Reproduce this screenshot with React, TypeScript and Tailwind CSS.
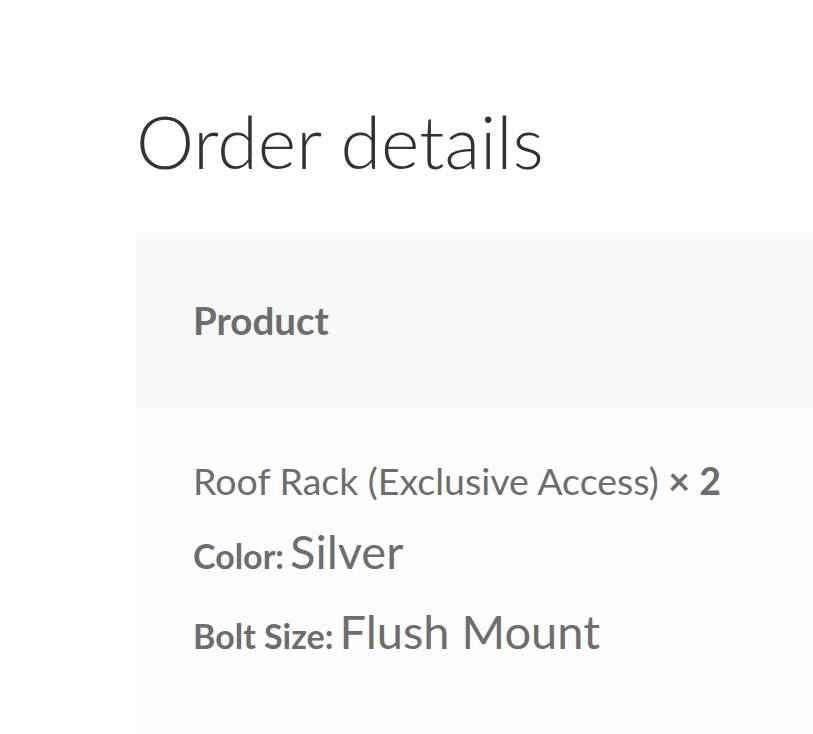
const meta = [
  { label: 'Color:', value: 'Silver' },
  { label: 'Bolt Size:', value: 'Flush Mount' },
];

export default function App() {
  return (
    <div className="min-h-screen bg-white font-[Lato,sans-serif] pl-[136px] pt-[104px]">
      <h1 className="text-[73.5px] leading-none font-light text-[#333333]">Order details</h1>

      <div className="mt-[55px] text-[#6d6d6d]">
        {/* Table head */}
        <div className="h-[176px] bg-[#f8f8f8] flex items-center pl-[57px]">
          <span className="text-[38.5px] font-bold">Product</span>
        </div>

        {/* Item row */}
        <div className="bg-[#fdfdfd] pl-[57px] pt-[48px] pb-[80px]">
          <div className="text-[37.5px] leading-[48px]">
            Roof Rack (Exclusive Access) <strong className="font-bold">× 2</strong>
          </div>
          {meta.map((m, i) => (
            <div
              key={m.label}
              className={`text-[47px] leading-[60px] ${i === 0 ? 'mt-[16px]' : 'mt-[20px]'}`}
            >
              <span className="text-[34px] leading-none font-bold">{m.label}</span>
              <span className="ml-[6px]">{m.value}</span>
            </div>
          ))}
        </div>
      </div>
    </div>
  );
}
